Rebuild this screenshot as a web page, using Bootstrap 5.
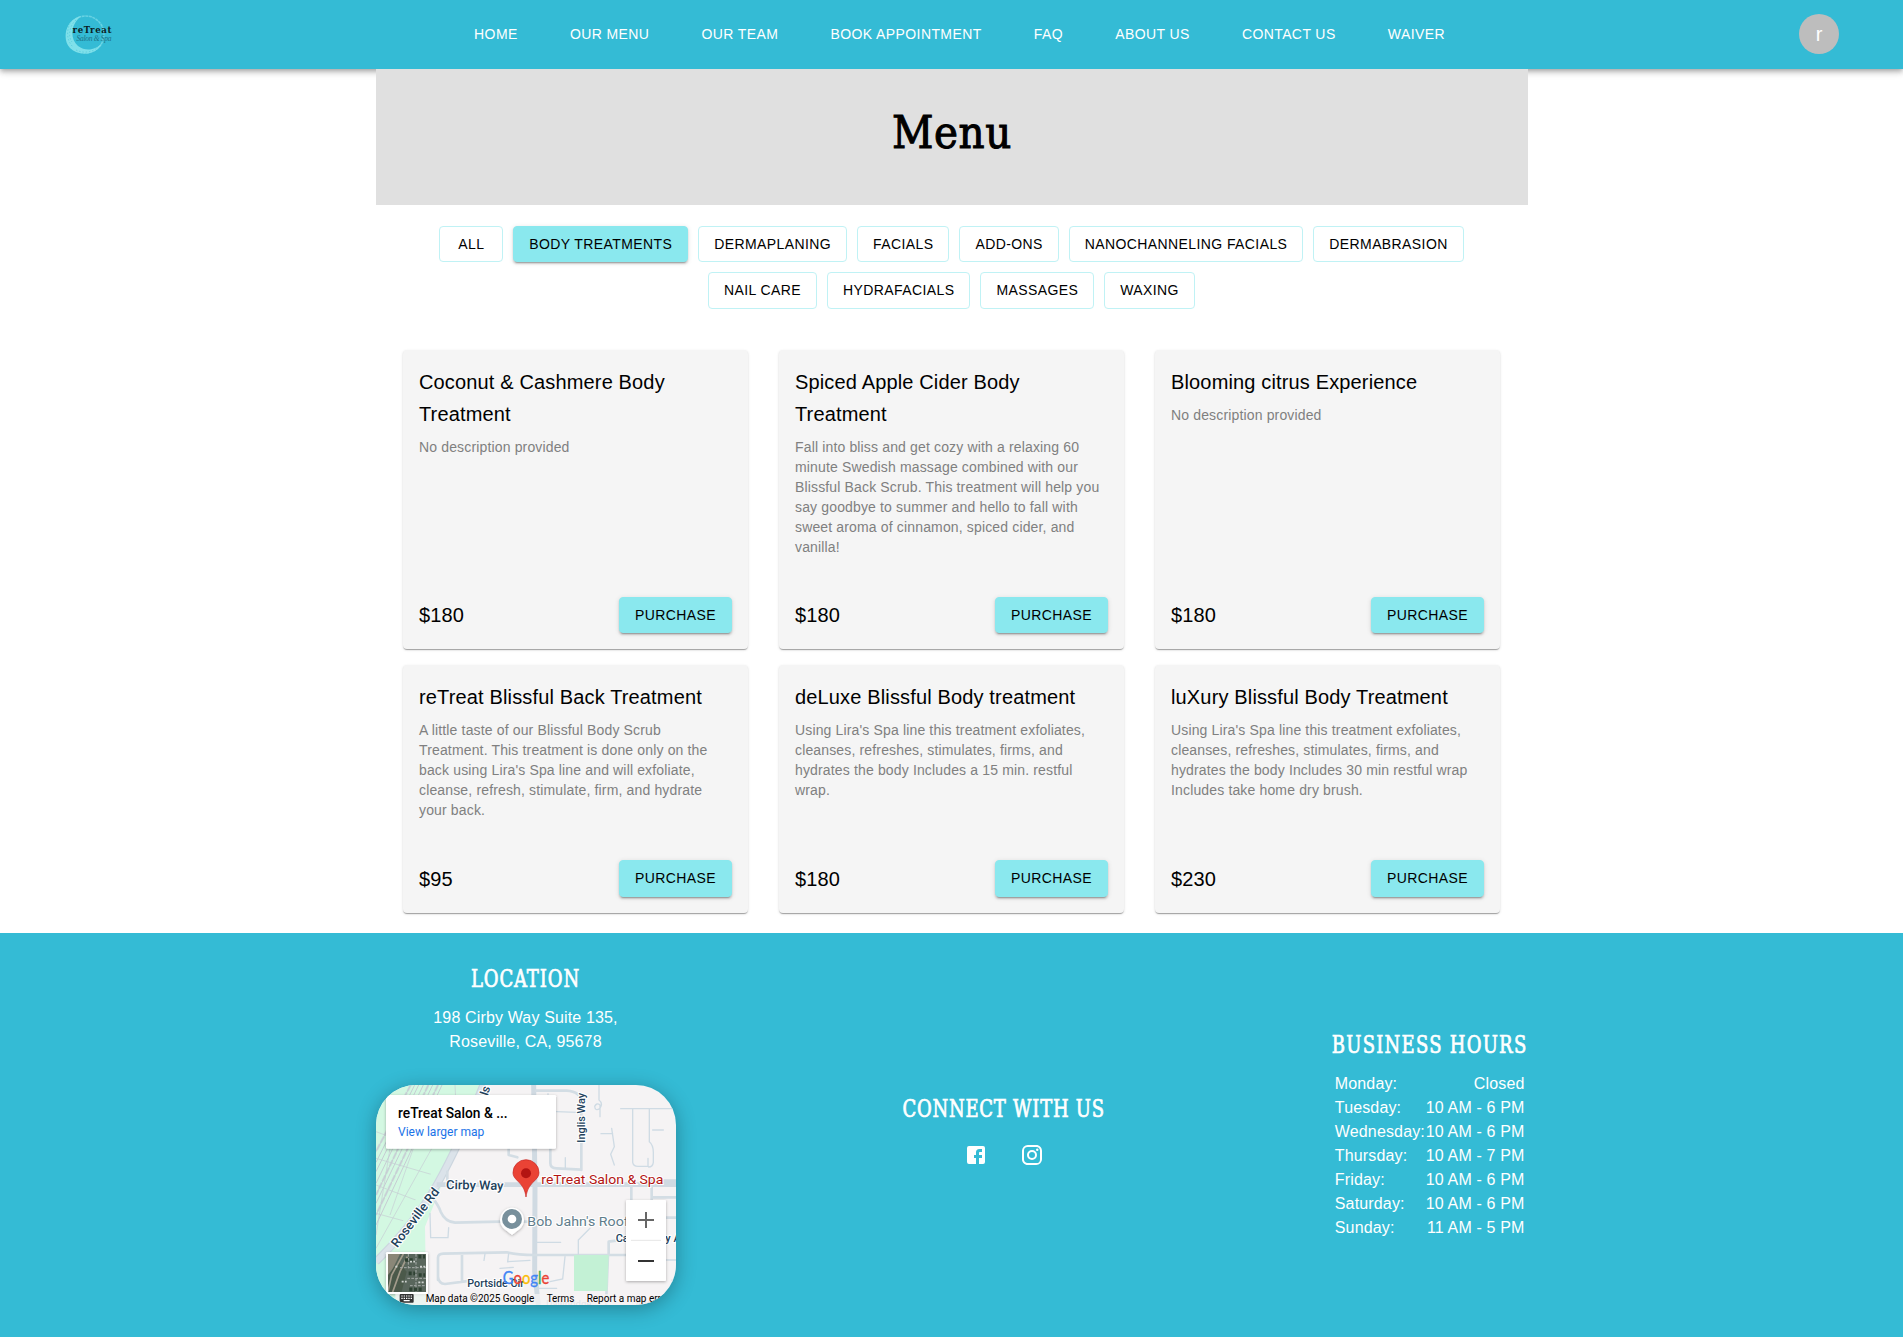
<!DOCTYPE html>
<html lang="en">
<head>
<meta charset="utf-8">
<meta name="viewport" content="width=device-width, initial-scale=1">
<title>reTreat Salon &amp; Spa – Menu</title>
<link href="https://cdn.jsdelivr.net/npm/bootstrap@5.3.0/dist/css/bootstrap.min.css" rel="stylesheet">
<style>
  body { font-family: "Liberation Sans", Arial, sans-serif; color: #000; background: #fff; overflow-x: hidden; }
  .site-bar { height: 69px; padding: 0 64px 2px; background: #34bbd5; box-shadow: 0 2px 4px -1px rgba(0,0,0,.2), 0 4px 5px rgba(0,0,0,.14), 0 1px 10px rgba(0,0,0,.12); }
  .site-bar .nav-link { color: #fff; font-size: 14px; line-height: 24px; letter-spacing: .02857em; padding: 0 26.1px; }
  .site-logo { width: 56px; height: 56px; }
  .user-avatar { width: 40px; height: 40px; background: #bdbdbd; color: #fff; font-size: 20px; line-height: 1; }
  .page-wrap { width: 1152px; margin: 0 auto; }
  .type-face { font-family: "DejaVu Serif Condensed", "DejaVu Serif", serif; font-stretch: condensed; font-weight: 400; }
  .page-banner { height: 136px; background: #e0e0e0; padding-bottom: 10px; position: relative; }
  .page-banner h1 { font-size: 45px; line-height: 1; letter-spacing: .6px; padding-left: 1px; -webkit-text-stroke: 1px #000; }
  .filters { gap: 10px; padding: 20.5px 16px 0; }
  .btn-spa { min-width: 64px; height: 36.5px; padding: 5px 15px; font-size: 14px; line-height: 24.5px; letter-spacing: .02857em; border-radius: 4px; color: #000; border: 1px solid #c0f2f5; background: #fff; }
  .btn-spa.filled { background: #8ae8ee; border-color: #8ae8ee; box-shadow: 0 3px 1px -2px rgba(0,0,0,.2), 0 2px 2px rgba(0,0,0,.14), 0 1px 5px rgba(0,0,0,.12); }
  .services { margin: 41px 12px 0; row-gap: 15.5px; padding-bottom: 20px; }
  .service { width: 345px; background: #f5f5f5; border: 0; border-radius: 4px; padding: 16px; box-shadow: 0 2px 1px -1px rgba(0,0,0,.2), 0 1px 1px rgba(0,0,0,.14), 0 1px 3px rgba(0,0,0,.12); }
  .service h2 { font-size: 20px; line-height: 32px; font-weight: 400; margin: 0 0 7.4px; letter-spacing: .0075em; }
  .service p { font-size: 14px; line-height: 20px; color: #808080; margin: 0 0 40.1px; letter-spacing: .01071em; }
  .price { font-size: 20px; line-height: 32px; letter-spacing: .0075em; }
  .site-foot { background: #34bbd5; color: #fff; height: 404px; }
  .foot-title { font-size: 20px; line-height: 26px; margin: 0 0 14px; white-space: nowrap; -webkit-text-stroke: .6px #fff; transform: translateY(1px) scaleY(1.16); }
  .ls-a { letter-spacing: .9px; } .ls-b { letter-spacing: .75px; } .ls-c { letter-spacing: 1.25px; }
  .foot-text { font-size: 16px; line-height: 24px; letter-spacing: .00938em; padding-top: 1px; }
  .map-box { width: 300px; height: 220px; border-radius: 40px; overflow: hidden; margin-top: 31px; box-shadow: 0 4px 20px rgba(0,0,0,.3); }
  .hours { padding-left: 3px; padding-right: 3px; margin-bottom: -1px; }
</style>
</head>
<body>
<header class="site-bar d-flex align-items-center">
  <a class="site-logo flex-shrink-0" href="#" aria-label="reTreat Salon &amp; Spa">
    <svg class="d-block" width="56" height="56" viewBox="0 0 56 56">
      <circle cx="21.500" cy="28.500" r="18.500" fill="none" stroke="#7edbe8" stroke-width="1.600" stroke-dasharray="3 .6" opacity=".7"/>
      <path d="M14 11C1 16-2 34 6 42C15 51 33 49 38 37C32 44 22 46 14 40C6 33 6 19 17 10Z" fill="#7fe0ea"/>
      <path d="M6 17C2 26 3 35 9 41M12 14C5 20 4 31 8 36M12 44C20 48 29 46 34 41" fill="none" stroke="#5fd0e0" stroke-width="1" stroke-dasharray="1.500 1.800"/>
      <text x="8.500" y="27" textLength="39" font-family="DejaVu Serif Condensed, DejaVu Serif, serif" font-stretch="condensed" font-weight="bold" font-size="9.500" fill="#0b1e24">reTreat</text>
      <text x="12.500" y="34.500" textLength="35" font-family="Liberation Serif, serif" font-style="italic" font-size="7.500" fill="#1d7388">Salon &amp; Spa</text>
    </svg>
  </a>
  <nav class="nav flex-grow-1 justify-content-center flex-nowrap">
    <a class="nav-link" href="#">HOME</a>
    <a class="nav-link" href="#">OUR MENU</a>
    <a class="nav-link" href="#">OUR TEAM</a>
    <a class="nav-link" href="#">BOOK APPOINTMENT</a>
    <a class="nav-link" href="#">FAQ</a>
    <a class="nav-link" href="#">ABOUT US</a>
    <a class="nav-link" href="#">CONTACT US</a>
    <a class="nav-link" href="#">WAIVER</a>
  </nav>
  <div class="user-avatar rounded-circle d-flex align-items-center justify-content-center flex-shrink-0">r</div>
</header>

<main class="page-wrap">
  <div class="page-banner d-flex align-items-center justify-content-center">
    <h1 class="type-face mb-0">Menu</h1>
  </div>
  <div class="filters d-flex flex-wrap justify-content-center">
    <button class="btn btn-spa">ALL</button>
    <button class="btn btn-spa filled">BODY TREATMENTS</button>
    <button class="btn btn-spa">DERMAPLANING</button>
    <button class="btn btn-spa">FACIALS</button>
    <button class="btn btn-spa">ADD-ONS</button>
    <button class="btn btn-spa">NANOCHANNELING FACIALS</button>
    <button class="btn btn-spa">DERMABRASION</button>
    <button class="btn btn-spa">NAIL CARE</button>
    <button class="btn btn-spa">HYDRAFACIALS</button>
    <button class="btn btn-spa">MASSAGES</button>
    <button class="btn btn-spa">WAXING</button>
  </div>

  <div class="services row gx-0">
    <div class="col-4 d-flex justify-content-center"><article class="card service">
      <h2>Coconut &amp; Cashmere Body Treatment</h2><p>No description provided</p>
      <div class="d-flex justify-content-between align-items-center mt-auto"><span class="price">$180</span><button class="btn btn-spa filled">PURCHASE</button></div>
    </article></div>
    <div class="col-4 d-flex justify-content-center"><article class="card service">
      <h2>Spiced Apple Cider Body Treatment</h2><p>Fall into bliss and get cozy with a relaxing 60 minute Swedish massage combined with our Blissful Back Scrub. This treatment will help you say goodbye to summer and hello to fall with sweet aroma of cinnamon, spiced cider, and vanilla!</p>
      <div class="d-flex justify-content-between align-items-center mt-auto"><span class="price">$180</span><button class="btn btn-spa filled">PURCHASE</button></div>
    </article></div>
    <div class="col-4 d-flex justify-content-center"><article class="card service">
      <h2>Blooming citrus Experience</h2><p>No description provided</p>
      <div class="d-flex justify-content-between align-items-center mt-auto"><span class="price">$180</span><button class="btn btn-spa filled">PURCHASE</button></div>
    </article></div>
    <div class="col-4 d-flex justify-content-center"><article class="card service">
      <h2>reTreat Blissful Back Treatment</h2><p>A little taste of our Blissful Body Scrub Treatment. This treatment is done only on the back using Lira's Spa line and will exfoliate, cleanse, refresh, stimulate, firm, and hydrate your back.</p>
      <div class="d-flex justify-content-between align-items-center mt-auto"><span class="price">$95</span><button class="btn btn-spa filled">PURCHASE</button></div>
    </article></div>
    <div class="col-4 d-flex justify-content-center"><article class="card service">
      <h2>deLuxe Blissful Body treatment</h2><p>Using Lira's Spa line this treatment exfoliates, cleanses, refreshes, stimulates, firms, and hydrates the body Includes a 15 min. restful wrap.</p>
      <div class="d-flex justify-content-between align-items-center mt-auto"><span class="price">$180</span><button class="btn btn-spa filled">PURCHASE</button></div>
    </article></div>
    <div class="col-4 d-flex justify-content-center"><article class="card service">
      <h2>luXury Blissful Body Treatment</h2><p>Using Lira's Spa line this treatment exfoliates, cleanses, refreshes, stimulates, firms, and hydrates the body Includes 30 min restful wrap Includes take home dry brush.</p>
      <div class="d-flex justify-content-between align-items-center mt-auto"><span class="price">$230</span><button class="btn btn-spa filled">PURCHASE</button></div>
    </article></div>
  </div>
</main>

<footer class="site-foot">
  <div class="page-wrap h-100 d-flex justify-content-between align-items-center">
    <section class="text-center">
      <h3 class="foot-title type-face ls-a">LOCATION</h3>
      <div class="foot-text">198 Cirby Way Suite 135,<br>Roseville, CA, 95678</div>
      <div class="map-box">
        <svg class="d-block" width="300" height="220" viewBox="18 30 900 660" font-family="Roboto, sans-serif">
          <defs>
            <filter id="soft" x="-10%" y="-10%" width="120%" height="130%"><feDropShadow dx="0" dy="3" stdDeviation="4" flood-opacity=".3"/></filter>
            <clipPath id="parkClip"><path d="M18 30H340L18 575Z"/></clipPath>
            <clipPath id="satClip"><rect x="54" y="537" width="114" height="114"/></clipPath>
          </defs>
          <rect x="18" y="30" width="900" height="660" fill="#f5f3f4"/>
          <path d="M18 30H335L165 455L169 690H18Z" fill="#d3f8e2"/>
          <g fill="none" stroke="#c6ccd3" stroke-width="3" clip-path="url(#parkClip)">
            <path d="M122 30L18 230M134 30L18 262M146 30L18 290M160 30L18 325M175 30L18 360M188 30L18 385M204 30L18 420M216 30L18 450"/>
            <path d="M122 30L18 230M175 30L18 360M204 30L18 420" stroke-width="7" stroke-dasharray="20 5" opacity=".6"/>
            <path d="M18 170L140 215M18 250L190 300M18 330L150 380M18 415L110 440M255 30L258 90L18 520M60 220L18 480M130 220L60 420" stroke-width="2"/>
          </g>
          <path d="M340 30C300 130 245 250 200 330C150 420 70 510 18 560" fill="none" stroke="#ccd6df" stroke-width="24"/>
          <path d="M340 30C300 130 245 250 200 330C150 420 70 510 18 560" fill="none" stroke="#dbe3ea" stroke-width="17"/>
          <g fill="none" stroke="#d0dae2" stroke-width="14" stroke-linejoin="round">
            <path d="M491 30L495 340L494 590L505 690" stroke-width="15"/>
            <path d="M200 329H918" stroke-width="14"/>
            <path d="M840 324H918" stroke-width="22"/>
          </g>
          <g fill="none" stroke="#d3dde4" stroke-width="8" stroke-linejoin="round" stroke-linecap="round">
            <path d="M498 47H590Q632 50 634 80V285M541 220V265Q541 280 560 280L632 284M416 220V240L442 247M232 290V315"/>
            <path d="M185 365Q205 390 212 410Q225 440 255 443L390 440M455 440H500M784 335V400M845 335V375M845 367H918M888 428H918"/>
            <path d="M204 615V548Q204 537 220 536L410 532Q440 540 494 540H770M204 605Q206 627 225 627L310 616M276 540V620M716 540V500L765 493M714 540L708 690"/>
          </g>
          <g fill="none" stroke="#cfdbe4" stroke-width="4" stroke-linecap="round">
            <path d="M752 101H918M788 103V262Q790 274 804 274H834V250M838 103V200Q850 210 850 232V262Q848 276 836 276M848 165H880M687 30V75Q700 85 690 100Q675 110 674 94Q680 82 690 90V125M725 160L733 215L722 238L733 270M693 176H728M560 110L620 112M586 248V280M534 56V92M180 415L182 488H234L236 458M500 502H572M660 460L625 495V538M345 536L342 556M416 535L413 560L480 556M390 580L430 577M585 545L578 612L540 620M888 555H918M494 640H560M906 615L918 640"/>
          </g>
          <path d="M612 540H716L712 648H612Z" fill="#c3f1d5"/>
          <g fill="#22415b" stroke="#fff" stroke-width="7" stroke-linejoin="round" paint-order="stroke" font-weight="500">
            <text transform="translate(82 520) rotate(-53)" font-size="38" textLength="212" lengthAdjust="spacingAndGlyphs">Roseville Rd</text>
            <text x="228" y="342" font-size="38" textLength="172" lengthAdjust="spacingAndGlyphs" transform="rotate(1 228 342)">Cirby Way</text>
            <text transform="translate(645 203) rotate(-90)" font-size="34" textLength="149" lengthAdjust="spacingAndGlyphs">Inglis Way</text>
            <text transform="translate(353 64) rotate(-72)" font-size="36">ls</text>
            <text x="292" y="635" font-size="33" textLength="170" lengthAdjust="spacingAndGlyphs">Portside Cir</text>
            <text x="737" y="502" font-size="33">Ca</text>
            <text x="886" y="502" font-size="33">y Ave</text>
          </g>
          <text x="528" y="699" font-size="30" fill="#aab5c0" textLength="136" lengthAdjust="spacingAndGlyphs">Dawnridge</text>
          <text x="795" y="699" font-size="30" fill="#aab5c0">Apt</text>
          <text x="514" y="327" font-size="40" fill="#b31412" stroke="#fff" stroke-width="6" paint-order="stroke" textLength="366" lengthAdjust="spacingAndGlyphs">reTreat Salon &amp; Spa</text>
          <path d="M468 366C465 343 457 333 447 322C435 310 429 304 429 293A39 39 0 0 1 507 293C507 304 501 310 489 322C479 333 471 343 468 366Z" fill="#ea4335" stroke="#c5221f" stroke-width="2"/>
          <circle cx="468" cy="295" r="15" fill="#b31412"/>
          <path d="M426 480L404 463A36 36 0 1 1 448 463Z" fill="#fff" filter="url(#soft)"/>
          <circle cx="426" cy="432" r="30" fill="#78909c"/><circle cx="426" cy="432" r="13" fill="#fff"/>
          <text x="472" y="452" font-size="41" fill="#607d8b" stroke="#fff" stroke-width="6" paint-order="stroke" textLength="304" lengthAdjust="spacingAndGlyphs">Bob Jahn's Roof</text>
          <rect x="48" y="60" width="510" height="161" rx="4" fill="#fff" filter="url(#soft)"/>
          <text x="84" y="129" font-size="42" font-weight="500" fill="#000" textLength="329" lengthAdjust="spacingAndGlyphs">reTreat Salon &amp; ...</text>
          <text x="84" y="182" font-size="37" fill="#1a73e8" textLength="259" lengthAdjust="spacingAndGlyphs">View larger map</text>
          <rect x="768" y="375" width="120" height="243" rx="3" fill="#fff" filter="url(#soft)"/>
          <path d="M783 496H873" stroke="#e6e6e6" stroke-width="3"/>
          <path d="M804 435H852M828 411V459" stroke="#666" stroke-width="6"/>
          <path d="M804 558H852" stroke="#333" stroke-width="6"/>
          <rect x="48" y="531" width="126" height="126" rx="4" fill="#fff" filter="url(#soft)"/>
          <g clip-path="url(#satClip)">
            <rect x="54" y="537" width="114" height="114" fill="#59665c"/>
            <path d="M54 537H90L54 610Z" fill="#8a8778"/><path d="M54 600L85 560L110 590L95 651H54Z" fill="#4b594a"/>
            <path d="M54 650L65 600L100 537M68 651L90 590L112 545" fill="none" stroke="#a39c8c" stroke-width="5"/>
            <path d="M115 537V580M138 537V651M90 578H168M112 610H168M120 632H168" stroke="#a5aaa8" stroke-width="3" stroke-dasharray="8 4"/>
            <path d="M145 545H165M105 555H130M116 595H135M146 600H165M118 643H160" stroke="#2e4132" stroke-width="11" stroke-dasharray="9 5"/>
            <path d="M150 575H166M95 620H110M145 622H162M120 560H135M76 575H84" stroke="#cfd3d0" stroke-width="5" stroke-dasharray="6 4"/>
          </g>
          <rect x="76" y="657" width="842" height="33" fill="#f5f3f4" opacity=".75"/>
          <rect x="89" y="657" width="42" height="26" rx="3" fill="#333"/>
          <path d="M94 663H127M94 670H127" stroke="#fff" stroke-width="3.500" stroke-dasharray="4 3"/><path d="M101 677H119" stroke="#fff" stroke-width="3.500"/>
          <g font-size="30" fill="#000">
            <text x="167" y="681" textLength="326" lengthAdjust="spacingAndGlyphs">Map data ©2025 Google</text>
            <text x="530" y="681" textLength="83" lengthAdjust="spacingAndGlyphs">Terms</text>
            <text x="650" y="681" textLength="250" lengthAdjust="spacingAndGlyphs">Report a map error</text>
          </g>
          <text x="398" y="628" font-family="Lato, sans-serif" font-size="50" textLength="140" lengthAdjust="spacingAndGlyphs" stroke-width="1"><tspan fill="#4285f4" stroke="#4285f4">G</tspan><tspan fill="#ea4335" stroke="#ea4335">o</tspan><tspan fill="#fbbc04" stroke="#fbbc04">o</tspan><tspan fill="#4285f4" stroke="#4285f4">g</tspan><tspan fill="#34a853" stroke="#34a853">l</tspan><tspan fill="#ea4335" stroke="#ea4335">e</tspan></text>
        </svg>
      </div>
    </section>
    <section class="text-center">
      <h3 class="foot-title type-face ls-b">CONNECT WITH US</h3>
      <div class="d-flex justify-content-center gap-3">
        <a href="#" class="p-2 d-flex text-white" aria-label="Facebook"><svg width="24" height="24" viewBox="0 0 24 24" fill="currentColor"><path d="M5 3h14a2 2 0 0 1 2 2v14a2 2 0 0 1-2 2h-4v-6h3v-3h-3v-2c0-.6.4-1 1-1h2V6h-2.500C13 6 12 7.500 12 9.500V12h-2v3h2v6H5a2 2 0 0 1-2-2V5a2 2 0 0 1 2-2z"/></svg></a>
        <a href="#" class="p-2 d-flex text-white" aria-label="Instagram"><svg width="24" height="24" viewBox="0 0 24 24" fill="currentColor"><path d="M7.800 2h8.400C19.400 2 22 4.600 22 7.800v8.400a5.800 5.800 0 0 1-5.800 5.800H7.800C4.600 22 2 19.400 2 16.200V7.800A5.800 5.800 0 0 1 7.800 2m-.2 2A3.600 3.600 0 0 0 4 7.600v8.800C4 18.390 5.610 20 7.600 20h8.800a3.600 3.600 0 0 0 3.600-3.600V7.600C20 5.610 18.390 4 16.400 4H7.600m9.650 1.500a1.250 1.250 0 1 1 0 2.500 1.250 1.250 0 0 1 0-2.500M12 7a5 5 0 1 1 0 10 5 5 0 0 1 0-10m0 2a3 3 0 1 0 0 6 3 3 0 0 0 0-6z"/></svg></a>
      </div>
    </section>
    <section>
      <h3 class="foot-title type-face ls-c">BUSINESS HOURS</h3>
      <div class="hours foot-text">
        <div class="d-flex justify-content-between"><span>Monday:</span><span>Closed</span></div>
        <div class="d-flex justify-content-between"><span>Tuesday:</span><span>10 AM - 6 PM</span></div>
        <div class="d-flex justify-content-between"><span>Wednesday:</span><span>10 AM - 6 PM</span></div>
        <div class="d-flex justify-content-between"><span>Thursday:</span><span>10 AM - 7 PM</span></div>
        <div class="d-flex justify-content-between"><span>Friday:</span><span>10 AM - 6 PM</span></div>
        <div class="d-flex justify-content-between"><span>Saturday:</span><span>10 AM - 6 PM</span></div>
        <div class="d-flex justify-content-between"><span>Sunday:</span><span>11 AM - 5 PM</span></div>
      </div>
    </section>
  </div>
</footer>
<script src="https://cdn.jsdelivr.net/npm/bootstrap@5.3.0/dist/js/bootstrap.bundle.min.js"></script>
</body>
</html>
